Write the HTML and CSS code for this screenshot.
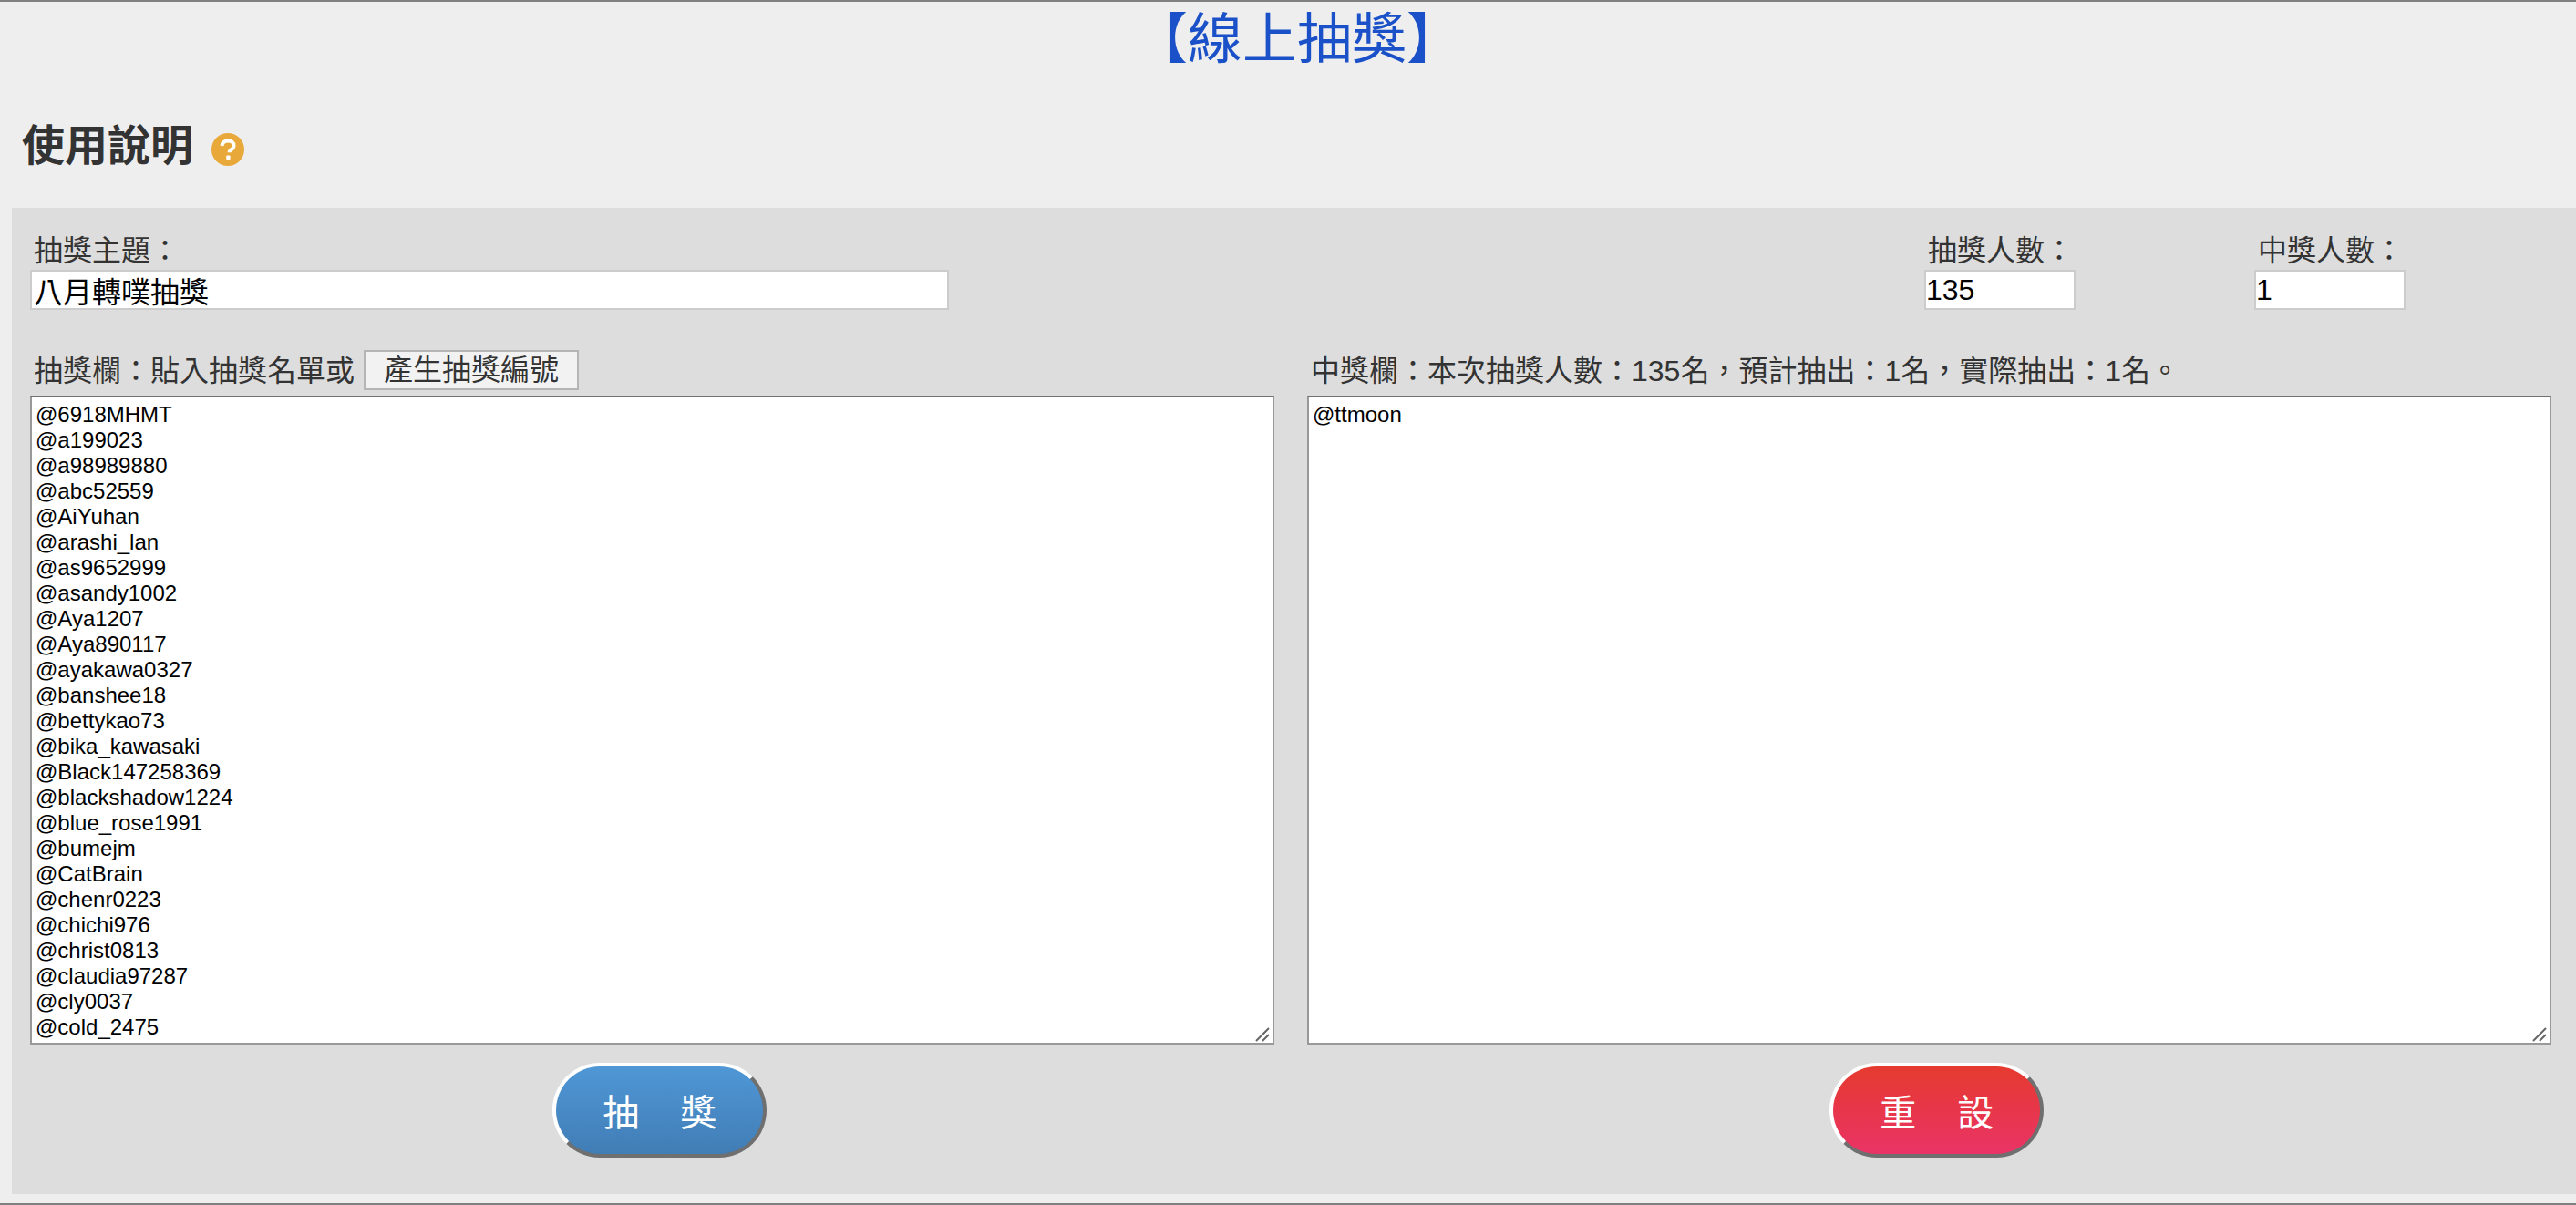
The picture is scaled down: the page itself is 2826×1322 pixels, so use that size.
FILE: index.html
```html
<!DOCTYPE html>
<html lang="zh-Hant">
<head>
  <meta charset="UTF-8">
  <title>線上抽獎</title>
  <link rel="stylesheet" href="styles.css">
</head>
<body>
  <h1 class="title">【線上抽獎】</h1>
  <h2 class="help">
    使用說明
    <svg class="help-icon" viewBox="0 0 36 36" width="36" height="36">
      <circle cx="18" cy="18" r="18" fill="#e8a93a"/>
      <path d="M11.5 14c.3-3.6 3-5.6 6.600-5.600 3.800 0 6.400 2.200 6.400 5.300 0 2.300-1.200 3.500-3 4.700-1.400.9-1.900 1.500-1.900 2.900" fill="none" stroke="#fff" stroke-width="4"/>
      <rect x="16.200" y="24.500" width="4.400" height="4.400" rx="1" fill="#fff"/>
    </svg>
  </h2>

  <div class="panel">
    <div class="top-row">
      <div class="field field-topic">
        <label class="label">抽獎主題：</label>
        <input class="input input-topic" type="text" value="八月轉噗抽獎">
      </div>
      <div class="field field-count">
        <label class="label">抽獎人數：</label>
        <input class="input input-num" type="text" value="135">
      </div>
      <div class="field field-count">
        <label class="label">中獎人數：</label>
        <input class="input input-num" type="text" value="1">
      </div>
    </div>

    <div class="columns">
      <div class="col">
        <div class="col-head">
          <span class="label">抽獎欄：貼入抽獎名單或</span>
          <button class="gen-btn" type="button">產生抽獎編號</button>
        </div>
        <div class="box-wrap">
          <textarea class="box" spellcheck="false">@6918MHMT
@a199023
@a98989880
@abc52559
@AiYuhan
@arashi_lan
@as9652999
@asandy1002
@Aya1207
@Aya890117
@ayakawa0327
@banshee18
@bettykao73
@bika_kawasaki
@Black147258369
@blackshadow1224
@blue_rose1991
@bumejm
@CatBrain
@chenr0223
@chichi976
@christ0813
@claudia97287
@cly0037
@cold_2475</textarea>
          <svg class="grip" viewBox="0 0 16 16" width="16" height="16">
            <path d="M1 15 15 1M8 15l7-7" stroke="#666" stroke-width="2" fill="none"/>
          </svg>
        </div>
        <button class="big-btn btn-blue" type="button">抽　獎</button>
      </div>
      <div class="col">
        <div class="col-head">
          <span class="label">中獎欄：本次抽獎人數：135名，預計抽出：1名，實際抽出：1名。</span>
        </div>
        <div class="box-wrap">
          <textarea class="box" spellcheck="false">@ttmoon</textarea>
          <svg class="grip" viewBox="0 0 16 16" width="16" height="16">
            <path d="M1 15 15 1M8 15l7-7" stroke="#666" stroke-width="2" fill="none"/>
          </svg>
        </div>
        <button class="big-btn btn-red" type="button">重　設</button>
      </div>
    </div>
  </div>
</body>
</html>
```

FILE: styles.css
```css
* { box-sizing: border-box; }
html, body { height: 100%; }
body { margin: 0; background: #eee; border-top: 2px solid #808080; border-bottom: 2px solid #808080; font-family: "Liberation Sans", "Noto Sans CJK TC", sans-serif; color: #333; overflow: hidden; }
.title { margin: 0; padding-top: 4px; height: 80px; font-size: 60px; line-height: 76px; font-weight: normal; text-align: center; color: #1a50c8; padding-left: 20px; }
.help { display: flex; align-items: flex-start; gap: 20px; margin: 0; padding: 46px 0 0 24px; height: 146px; font-size: 47px; line-height: 64px; font-weight: bold; color: #333; }
.help-icon { margin-top: 18px; }
.panel { margin-left: 13px; height: 1082px; background: #ddd; padding: 24px 20px 0; }
.top-row { display: flex; }
.field { display: flex; flex-direction: column; }
.field-topic { flex: 0 0 2078px; }
.field-count { flex: 0 0 362px; }
.label { font-size: 32px; line-height: 42px; padding-top: 2px; color: #333; padding-left: 4px; }
.input { height: 44px; border: 2px solid #ccc; background: #fff; font: inherit; font-size: 32px; color: #000; padding: 0 2px; outline: none; }
.input-topic { width: 1008px; }
.input-num { width: 166px; padding: 0; }
.columns { display: grid; grid-template-columns: 1365px 1365px; gap: 36px; margin-top: 44px; }
.col { display: flex; flex-direction: column; align-items: center; }
.col-head { display: flex; align-items: center; gap: 10px; align-self: flex-start; height: 44px; margin-bottom: 6px; }
.gen-btn { height: 44px; width: 236px; padding: 0; border: 2px solid #b5b5b5; background: #f2f2f2; font: inherit; font-size: 32px; line-height: 38px; color: #333; }
.box-wrap { position: relative; width: 100%; }
.box { display: block; width: 100%; height: 712px; padding: 5px 4px 4px; border: 2px solid #999; border-top-color: #707070; background: #fff; font: inherit; font-size: 24px; line-height: 28px; color: #000; overflow: hidden; outline: none; resize: none; }
.grip { position: absolute; right: 5px; bottom: 3px; pointer-events: none; }
.big-btn { margin: 20px 0 0 16px; width: 235px; height: 104px; border: 4px solid; border-color: #fff #6f6f6f #6f6f6f #fff; border-radius: 52px; font: inherit; font-size: 40px; color: #fff; padding: 0 0 0 3px; letter-spacing: 2.5px; }
.btn-blue { background: linear-gradient(#4f97d6, #417db5); }
.btn-red { background: linear-gradient(#e53a2f, #ea3366); }
```
